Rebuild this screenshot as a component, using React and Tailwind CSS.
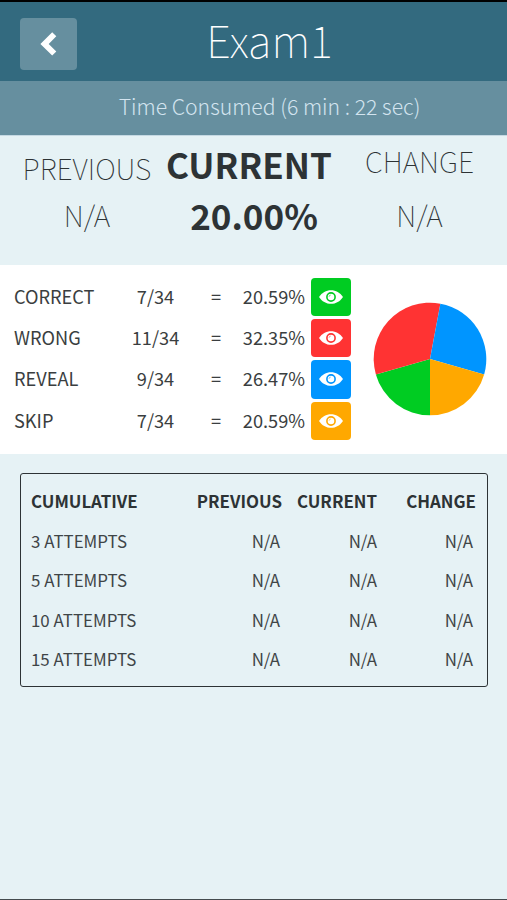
const results = [
  { label: "CORRECT", score: "7/34",  percent: "20.59%", value: 7,  color: "#00cc22", bg: "bg-[#00cc22]" },
  { label: "WRONG",   score: "11/34", percent: "32.35%", value: 11, color: "#ff3333", bg: "bg-[#ff3333]" },
  { label: "REVEAL",  score: "9/34",  percent: "26.47%", value: 9,  color: "#0095ff", bg: "bg-[#0095ff]" },
  { label: "SKIP",    score: "7/34",  percent: "20.59%", value: 7,  color: "#ffa800", bg: "bg-[#ffa800]" },
];

const attempts = [3, 5, 10, 15];

function BackIcon() {
  return (
    <svg width="17" height="24" viewBox="0 0 17 24">
      <path d="M12.2 0.3 L16.3 4.3 L8.7 11.9 L16.3 19.5 L12.2 23.5 L0.4 11.9 Z" fill="#fff" />
    </svg>
  );
}

function EyeIcon({ color }) {
  return (
    <svg width="24" height="14" viewBox="0 0 24 14">
      <path d="M0 7 C3 2.4 7.2 0.2 12 0.2 C16.8 0.2 21 2.4 24 7 C21 11.6 16.8 13.8 12 13.8 C7.2 13.8 3 11.6 0 7 Z" fill="#fff" />
      <circle cx="12" cy="7" r="4.1" fill="none" stroke={color} strokeWidth="1.6" />
      <path d="M10 6.8 A2 2 0 0 1 11.8 5" fill="none" stroke={color} strokeWidth="0.5" />
    </svg>
  );
}

function Pie() {
  const total = results.reduce((sum, r) => sum + r.value, 0);
  const point = t => [57 - 56.3 * Math.sin(t), 57 + 56.3 * Math.cos(t)];
  let angle = 0;
  return (
    <svg width="114" height="114" viewBox="0 0 114 114">
      {results.map(r => {
        const [x1, y1] = point(angle);
        angle += (r.value / total) * Math.PI * 2;
        const [x2, y2] = point(angle);
        return <path key={r.label} d={`M57 57 L${x1} ${y1} A56.3 56.3 0 0 1 ${x2} ${y2} Z`} fill={r.color} />;
      })}
    </svg>
  );
}

export default function App() {
  return (
    <div className="flex h-[900px] w-[507px] flex-col overflow-hidden border-t-2 border-b border-t-black border-b-[#444b4e] bg-[#e6f2f5] font-['Noto_Sans_CJK_SC',sans-serif] text-[#2d3335]">
      <header className="grid h-[79px] shrink-0 grid-cols-[77px_1fr_45px] items-center bg-[#336a7f]">
        <button className="ml-5 mt-1 flex h-[52px] w-[57px] items-center justify-center rounded-[4px] bg-[#668f9f]">
          <BackIcon />
        </button>
        <h1 className="pb-[3px] text-center text-[43.5px] leading-[76px] font-thin text-white">Exam1</h1>
      </header>
      <div className="h-[55px] shrink-0 border-b border-[#c5d9e3] bg-[#668f9f] pl-[32px] text-center text-[21.2px] leading-[50px] font-light text-[#d3e4ef]">
        Time Consumed (6 min : 22 sec)
      </div>

      <section className="grid h-[129px] shrink-0 grid-cols-[174px_158px_175px] text-center text-[28.6px] font-thin whitespace-nowrap">
        <div>
          <p className="pt-[8px] leading-[48px]">PREVIOUS</p>
          <p className="leading-[46px]">N/A</p>
        </div>
        <div className="text-[35px] font-bold">
          <p className="-ml-2 pt-[4px] leading-[48px]">CURRENT</p>
          <p className="pt-1 pl-[2px] leading-[46px]">20.00%</p>
        </div>
        <div>
          <p className="pt-[1px] leading-[48px]">CHANGE</p>
          <p className="pt-[7px] leading-[46px]">N/A</p>
        </div>
      </section>

      <section className="flex h-[189px] shrink-0 bg-white pt-[13px]">
        <div className="flex flex-col gap-[3px]">
          {results.map(r => (
            <div key={r.label} className="grid h-[38.2px] grid-cols-[97px_89px_32px_79px_40px] pl-[14px] text-[18.2px] leading-[37px] text-[#3a3e40]">
              <span>{r.label}</span>
              <span className="text-center">{r.score}</span>
              <span className="text-center">=</span>
              <span className="pr-[6px] text-right">{r.percent}</span>
              <button className={`flex items-center justify-center rounded-[4px] ${r.bg}`}>
                <EyeIcon color={r.color} />
              </button>
            </div>
          ))}
        </div>
        <div className="ml-[22px] pt-[24px]">
          <Pie />
        </div>
      </section>

      <section className="mx-5 mt-[19px] h-[214px] w-[468px] shrink-0 rounded-[3px] border-[1.5px] border-[#2d3335] px-[10px] pt-[7px] text-[16.9px] leading-[39.5px]">
        <div className="grid grid-cols-[156px_95px_95px_99px] font-bold">
          <span>CUMULATIVE</span>
          <span className="text-right">PREVIOUS</span>
          <span className="text-right">CURRENT</span>
          <span className="text-right">CHANGE</span>
        </div>
        {attempts.map(n => (
          <div key={n} className="grid grid-cols-[154px_95px_97px_96px] text-[#3f4547]">
            <span>{n} ATTEMPTS</span>
            <span className="text-right">N/A</span>
            <span className="text-right">N/A</span>
            <span className="text-right">N/A</span>
          </div>
        ))}
      </section>
    </div>
  );
}
